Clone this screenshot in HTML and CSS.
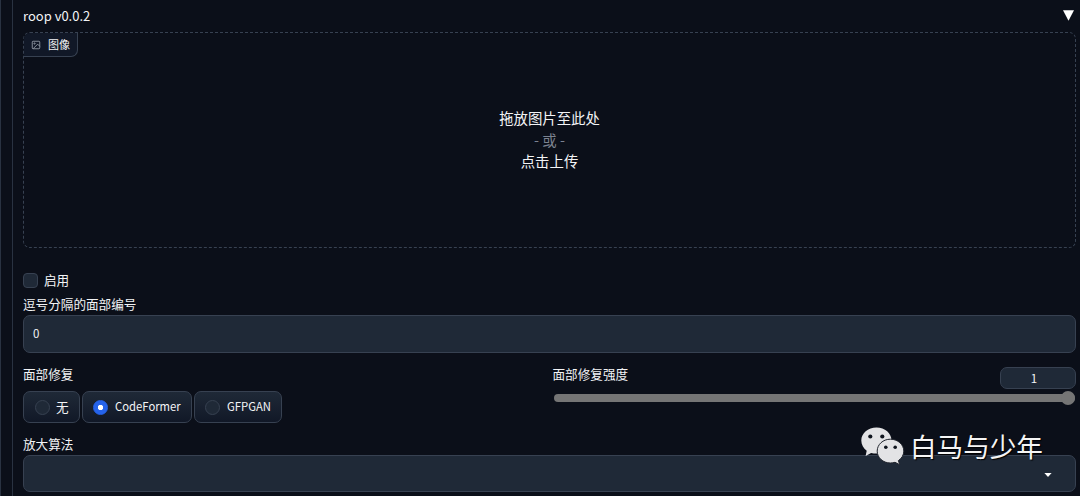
FILE: index.html
```html
<!DOCTYPE html>
<html lang="zh-CN">
<head>
    <meta charset="UTF-8">
    <meta name="viewport" content="width=device-width, initial-scale=1.0">
    <title>roop v0.0.2</title>
    <link rel="stylesheet" href="styles.css">
</head>
<body>

<div class="outer">
    <div class="panel">
        <div class="panel-header">
            <span>roop v0.0.2</span>
            <svg class="toggle" viewBox="0 0 11 11"><path d="M0 0.3h11L5.5 10.7z" fill="#fff"/></svg>
        </div>

        <div class="dropzone">
            <div class="tag">
                <svg class="tag-icon" viewBox="0 0 24 24" fill="none" stroke="currentColor" stroke-width="2">
                    <rect x="3" y="3" width="18" height="18" rx="2"/>
                    <circle cx="8.5" cy="8.5" r="1.5"/>
                    <path d="M21 15l-5-5L5 21"/>
                </svg>
                <span>图像</span>
            </div>
            <div class="drop-text">
                <span>拖放图片至此处</span>
                <span class="or">- 或 -</span>
                <span>点击上传</span>
            </div>
        </div>

        <label class="check-row">
            <span class="checkbox"></span>
            <span class="check-text">启用</span>
        </label>

        <div class="label">逗号分隔的面部编号</div>
        <div class="field">0</div>

        <div class="row">
            <div class="col">
                <div class="label">面部修复</div>
                <div class="radios">
                    <label class="radio none"><span class="dot"></span><span class="radio-text">无</span></label>
                    <label class="radio codeformer"><span class="dot checked"></span><span class="radio-text">CodeFormer</span></label>
                    <label class="radio gfpgan"><span class="dot"></span><span class="radio-text">GFPGAN</span></label>
                </div>
            </div>
            <div class="col">
                <div class="slider-head">
                    <div class="label">面部修复强度</div>
                    <div class="number">1</div>
                </div>
                <div class="slider"><span class="thumb"></span></div>
            </div>
        </div>

        <div class="label">放大算法</div>
        <div class="field select">
            <svg class="caret" viewBox="0 0 8 4"><path d="M0.4 0h7.2L4 4z" fill="#fff"/></svg>
        </div>
    </div>
</div>

<div class="watermark">
    <svg class="wechat" viewBox="0 0 44 38">
        <path fill="#e3e3e5" d="M15.500 .5C7 .5 .3 6.200 .3 13.500c0 4.300 2.200 7.900 5.400 10.300L4.600 29l5.500-3.100c1.800.5 3.600.7 5.400.7 8.400 0 15-5.900 15-13.100S24 .5 15.500 .5z"/>
        <path fill="#e3e3e5" stroke="#20242d" stroke-width="1" d="M29.400 12.200c-7.400 0-13.200 5.300-13.200 11.900s5.800 11.900 13.200 11.900c1.600 0 3.100-.3 4.600-.7l4.700 2.400-1.300-4.100c3.300-2.200 5.400-5.600 5.400-9.500 0-6.600-6-11.900-13.400-11.900z"/>
        <g fill="#10151e">
            <circle cx="9.300" cy="9.500" r="2.100"/>
            <circle cx="21.300" cy="9.500" r="2.100"/>
            <circle cx="24.800" cy="20.200" r="1.800"/>
            <circle cx="34.200" cy="20.200" r="1.800"/>
        </g>
    </svg>
    <span>白马与少年</span>
</div>

</body>
</html>
```

FILE: styles.css
```css
* {
    box-sizing: border-box;
}

body {
    margin: 0;
    height: 496px;
    overflow: hidden;
    background-color: #0b0f19;
    color: #f3f4f6;
    font-family: "Noto Sans CJK SC", sans-serif;
    font-size: 12.6px;
}

.outer {
    height: 496px;
    padding-left: 11px;
    border-left: 1px solid #293241;
}

.panel {
    height: 496px;
    padding: 0 4px 0 10px;
    border-left: 1px solid #293241;
}

.panel-header {
    display: flex;
    justify-content: space-between;
    align-items: center;
    height: 32px;
    padding-bottom: 2px;
    font-size: 13px;
}

.toggle {
    width: 11px;
    height: 11px;
    margin-right: 2px;
    margin-top: 1px;
}

.dropzone {
    display: flex;
    flex-direction: column;
    height: 216px;
    border: 1px dashed #374151;
    border-radius: 7px;
}

.tag {
    display: flex;
    align-items: center;
    align-self: flex-start;
    gap: 7px;
    width: 54px;
    height: 24px;
    padding-left: 7px;
    padding-bottom: 2px;
    background-color: #111827;
    border: 1px solid #374151;
    border-width: 0 1px 1px 0;
    border-radius: 6px 0 7px 0;
    font-size: 11px;
    line-height: 20px;
}

.tag-icon {
    width: 10px;
    height: 10px;
    margin-top: 2px;
    color: #9ca3af;
}

.drop-text {
    display: flex;
    flex-direction: column;
    align-items: center;
    margin-top: 50px;
    font-size: 14.4px;
    line-height: 21.6px;
}

.or {
    color: #7b8290;
}

.check-row {
    display: flex;
    align-items: center;
    gap: 6px;
    height: 15px;
    margin-top: 25px;
}

.check-text {
    line-height: 17px;
    padding-bottom: 2px;
}

.checkbox {
    width: 15px;
    height: 15px;
    background-color: #1f2937;
    border: 1px solid #374151;
    border-radius: 4px;
}

.label {
    height: 20px;
    line-height: 18px;
}

.check-row + .label {
    margin-top: 7px;
}

.field {
    height: 38px;
    padding: 0 9px;
    background-color: #1f2937;
    border: 1px solid #374151;
    border-radius: 7px;
    font-size: 11.5px;
    line-height: 35px;
}

.row {
    display: flex;
    gap: 6px;
    height: 70px;
    margin-top: 12px;
}

.col {
    flex: 1;
}

.radios {
    display: flex;
    gap: 2px;
    margin-top: 6px;
}

.radio {
    display: flex;
    align-items: center;
    gap: 7px;
    height: 32px;
    padding-left: 10px;
    background: linear-gradient(#1f2937, #111827);
    border: 1px solid #374151;
    border-radius: 7px;
    font-size: 11.3px;
}

.radio-text {
    padding-bottom: 2px;
}

.none {
    width: 57px;
    padding-left: 11px;
    gap: 6px;
    font-size: 12.6px;
}

.codeformer {
    width: 110px;
}

.gfpgan {
    width: 88px;
}

.dot {
    width: 15px;
    height: 15px;
    background-color: #1f2937;
    border: 1px solid #374151;
    border-radius: 50%;
}

.dot.checked {
    background: radial-gradient(circle, #fff 2.4px, #2563eb 3px);
    border-color: #2563eb;
}

.slider-head {
    display: flex;
    justify-content: space-between;
}

.number {
    width: 76px;
    height: 22px;
    margin-top: 2px;
    padding-right: 8px;
    background-color: #1f2937;
    border: 1px solid #374151;
    border-radius: 7px;
    font-size: 11.5px;
    line-height: 20px;
    text-align: center;
}

.slider {
    display: flex;
    justify-content: flex-end;
    align-items: center;
    height: 8px;
    margin: 5px 1px 0 1px;
    background-color: #757575;
    border-radius: 4px;
}

.thumb {
    width: 14px;
    height: 14px;
    background-color: #757575;
    border-radius: 50%;
}

.select {
    display: flex;
    justify-content: flex-end;
    align-items: center;
    height: 37px;
    padding-right: 23px;
}

.caret {
    width: 8px;
    height: 4px;
    margin-top: 2px;
}

/* signature laid over the bottom right corner */
.watermark {
    position: absolute;
    left: 861px;
    top: 427px;
    display: flex;
    align-items: center;
    gap: 5px;
    color: #f5f5f5;
    font-size: 26.6px;
    line-height: 38px;
    text-shadow: 1px 1px 1px #000;
}

.wechat {
    width: 44px;
    height: 38px;
}
```
